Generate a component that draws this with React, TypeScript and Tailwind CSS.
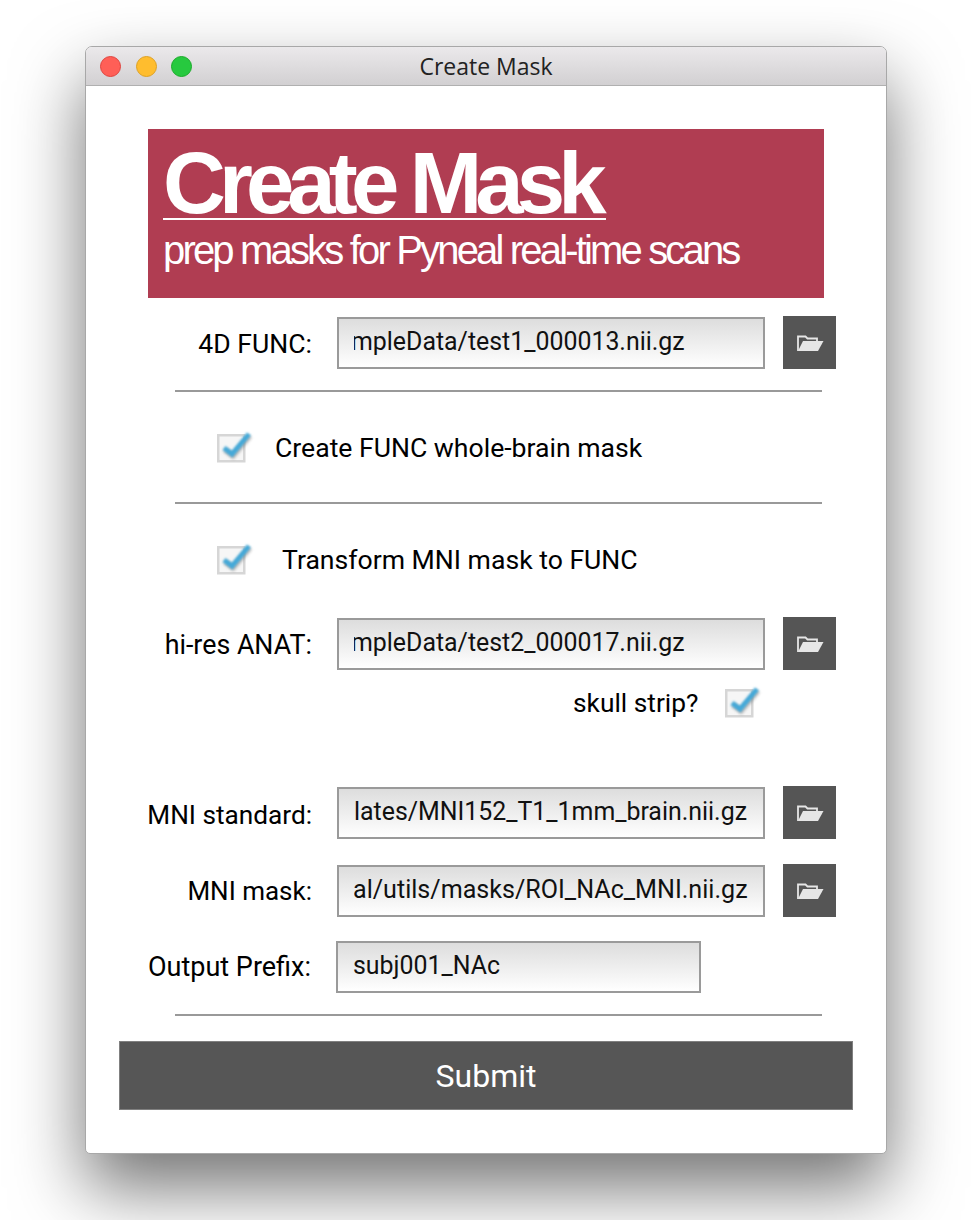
const roboto = "font-['Roboto',sans-serif]";

function FolderIcon() {
  return (
    <svg width="27" height="18" viewBox="0 0 27 18" fill="none">
      <path d="M1 17V2.5H8.5L10.5 4.5H20V7" stroke="#e6e6e6" strokeWidth="1.8" />
      <path d="M1 17L6 7H26.5L21 17Z" fill="#e6e6e6" />
    </svg>
  );
}

function FolderButton() {
  return (
    <div className="flex h-[53px] w-[53px] shrink-0 items-center justify-center bg-[#555555] pl-[1px]">
      <FolderIcon />
    </div>
  );
}

function Check() {
  return (
    <svg width="40" height="36" viewBox="0 0 40 36" className="shrink-0">
      <defs>
        <filter id="soft" x="-30%" y="-30%" width="160%" height="160%">
          <feGaussianBlur stdDeviation="0.8" />
        </filter>
        <filter id="shade" x="-30%" y="-30%" width="160%" height="160%">
          <feGaussianBlur stdDeviation="1.8" />
        </filter>
      </defs>
      <rect x="2.25" y="7.25" width="26" height="26" fill="#f6f6f6" stroke="#d6d6d6" strokeWidth="2.5" />
      <path d="M9 22L17 28L34 8" fill="none" stroke="#808080" strokeWidth="5" filter="url(#shade)" opacity="0.55" />
      <path d="M8 20L16 26L33 6" fill="none" stroke="#45a9d8" strokeWidth="5" filter="url(#soft)" />
    </svg>
  );
}

function Field({ value, clip, width = "w-[428px]", size = "text-[24.9px]" }: { value: string; clip: number; width?: string; size?: string }) {
  return (
    <div className={`flex h-[52px] ${width} shrink-0 items-center border-2 border-[#9a9a9a] bg-gradient-to-b from-[#dddddd] to-[#ffffff] pb-[3px] pl-[15px] pr-[15px]`}>
      <div className={`w-full overflow-hidden whitespace-nowrap ${size} leading-[34px] text-[#111111]`}>
        <span className="inline-block" style={{ marginLeft: -clip }}>{value}</span>
      </div>
    </div>
  );
}

function Row({ label, value, clip, mt, labelClass, size }: { label: string; value: string; clip: number; mt: string; labelClass: string; size?: string }) {
  return (
    <div className={`flex h-[53px] items-center ${mt}`}>
      <div className={`w-[226px] shrink-0 text-right leading-[34px] text-black ${labelClass}`}>{label}</div>
      <div className="ml-[25px] pt-[1px]">
        <Field value={value} clip={clip} size={size} />
      </div>
      <div className="ml-[18px]">
        <FolderButton />
      </div>
    </div>
  );
}

function Rule({ mt }: { mt: string }) {
  return <div className={`ml-[89px] h-[2px] w-[647px] bg-[#999999] ${mt}`} />;
}

export default function App() {
  return (
    <div className={`h-[1220px] w-[972px] overflow-hidden bg-white pl-[85px] pt-[46px] ${roboto}`}>
      <div className="flex h-[1108px] w-[802px] flex-col overflow-hidden rounded-[7px] rounded-b-[5px] border border-[#a8a8a8] bg-white shadow-[0_34px_70px_0_rgba(0,0,0,0.55)]">
        <div className="relative flex h-[39px] shrink-0 items-center border-b border-[#b0b0b0] bg-gradient-to-b from-[#ebe9eb] to-[#d2d0d2] pl-[14px]">
          <div className="flex gap-[14.5px]">
            <div className="h-[21px] w-[21px] rounded-full border border-[#e0443e] bg-[#ff5f57]" />
            <div className="h-[21px] w-[21px] rounded-full border border-[#dea123] bg-[#ffbd2e]" />
            <div className="h-[21px] w-[21px] rounded-full border border-[#1aab29] bg-[#27c93f]" />
          </div>
          <div className="absolute inset-x-0 top-0 text-center font-['Open_Sans',sans-serif] text-[23px] leading-[39px] text-[#222222]">Create Mask</div>
        </div>

        <div className="ml-[62px] mt-[43px] flex h-[169px] w-[676px] shrink-0 flex-col bg-[#b03d52] pl-[15px] font-['Liberation_Sans',sans-serif] text-white">
          <div className="w-[443px] border-b-[2px] border-white pb-[2px] pt-[20px]">
            <div className="whitespace-nowrap text-[87px] font-bold leading-[67px] tracking-[-6.9px]">Create Mask</div>
          </div>
          <div className="mt-[8px] whitespace-nowrap text-[40px] leading-[44px] tracking-[-2.83px]">prep masks for Pyneal real-time scans</div>
        </div>

        <Row label="4D FUNC:" value="mpleData/test1_000013.nii.gz" clip={3} mt="mt-[18px]" labelClass="pt-[2px] text-[26.6px]" />
        <Rule mt="mt-[21px]" />

        <div className="ml-[130px] mt-[36px] flex h-[36px] items-center">
          <Check />
          <div className="ml-[19px] pt-[4px] text-[26.6px] leading-[34px] text-black">Create FUNC whole-brain mask</div>
        </div>
        <Rule mt="mt-[38px]" />

        <div className="ml-[130px] mt-[36px] flex h-[36px] items-center">
          <Check />
          <div className="ml-[26px] pt-[4px] text-[26.6px] leading-[34px] text-black">Transform MNI mask to FUNC</div>
        </div>

        <Row label="hi-res ANAT:" value="mpleData/test2_000017.nii.gz" clip={3} mt="mt-[41px]" labelClass="pt-[2px] text-[26.8px]" />

        <div className="mt-[13px] flex h-[36px] items-center pl-[487px]">
          <div className="pt-[4px] text-[26.3px] leading-[34px] text-black">skull strip?</div>
          <div className="ml-[26px]"><Check /></div>
        </div>

        <Row label="MNI standard:" value="lates/MNI152_T1_1mm_brain.nii.gz" clip={0} mt="mt-[67px]" labelClass="pt-[4px] text-[26.2px]" />
        <Row label="MNI mask:" value="al/utils/masks/ROI_NAc_MNI.nii.gz" clip={1} mt="mt-[25px]" labelClass="text-[26px]" size="text-[25.1px]" />

        <div className="mt-[24px] flex h-[52px] items-center">
          <div className="w-[225px] shrink-0 text-right text-[27px] leading-[34px] text-black">Output Prefix:</div>
          <div className="ml-[25px]">
            <Field value="subj001_NAc" clip={0} width="w-[365px]" />
          </div>
        </div>

        <Rule mt="mt-[21px]" />

        <div className="ml-[33px] mt-[25px] flex h-[69px] w-[734px] shrink-0 items-center justify-center border border-[#808080] bg-[#565656] text-[32px] text-white">Submit</div>
      </div>
    </div>
  );
}
